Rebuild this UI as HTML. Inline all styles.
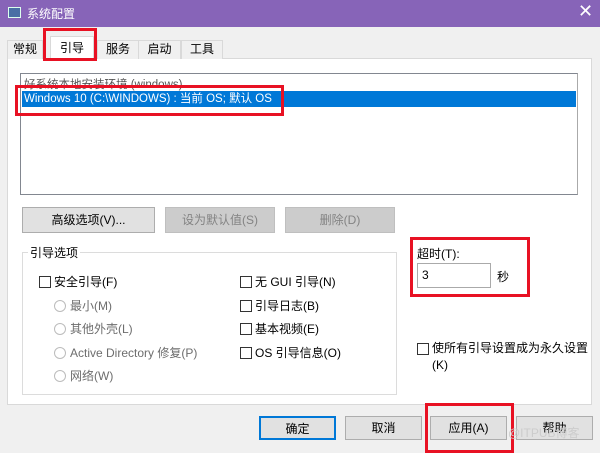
<!DOCTYPE html>
<html><head><meta charset="utf-8"><style>
*{box-sizing:border-box;margin:0;padding:0}
body{width:600px;height:450px;background:#f0f0f0;font-family:"Liberation Sans","Noto Sans CJK SC",sans-serif;font-size:12px;color:#000;position:relative;overflow:hidden}
.a{position:absolute}
.tb{left:0;top:0;width:600px;height:27px;background:#8764b8;color:#fff}
.tab{top:40px;height:19px;border:1px solid #d9d9d9;border-bottom:none;background:#f0f0f0;text-align:center;line-height:17px}
.btn{background:#e1e1e1;border:1px solid #adadad;text-align:center}
.dis{background:#cccccc;border:1px solid #bfbfbf;color:#838383}
.red{border:3px solid #e81123}
.cb{width:12px;height:12px;border:1px solid #333;background:#fff;display:inline-block;vertical-align:-2px;margin-right:3px}
.rd{width:12px;height:12px;border:1px solid #bcbcbc;border-radius:50%;display:inline-block;vertical-align:-2px;margin-right:4px}
.g{color:#6d6d6d}
</style></head><body>
<div class="a tb">
 <div class="a" style="left:8px;top:7px;width:13px;height:11px;border:1px solid #dfe;background:#4a6fa5"></div>
 <div class="a" style="left:27px;top:5px;font-size:12px">系统配置</div>
 <div class="a" style="left:578px;top:1px;font-size:18px;font-weight:300">✕</div>
</div>
<div class="a" style="left:7px;top:58px;width:585px;height:347px;background:#fff;border:1px solid #d9d9d9"></div>
<div class="a tab" style="left:7px;width:36px">常规</div>
<div class="a tab" style="left:97px;width:42px">服务</div>
<div class="a tab" style="left:138px;width:43px">启动</div>
<div class="a tab" style="left:181px;width:42px">工具</div>
<div class="a" style="left:50px;top:36px;width:44px;height:24px;background:#fff;border:1px solid #d9d9d9;border-bottom:none;text-align:center;line-height:22px">引导</div>
<div class="a red" style="left:43px;top:28px;width:54px;height:33px"></div>
<div class="a" style="left:20px;top:73px;width:558px;height:122px;border:1px solid #828790;border-right-color:#aaa;background:#fff"></div>
<div class="a" style="left:24px;top:76px;color:#555;font-size:11.5px">好系统本地安装环境 (windows)</div>
<div class="a" style="left:22px;top:91px;width:554px;height:16px;background:#0078d7;color:#fff;line-height:16px;padding-left:2px;font-size:11.5px">Windows 10 (C:\WINDOWS) : 当前 OS; 默认 OS</div>
<div class="a red" style="left:15px;top:85px;width:269px;height:31px"></div>
<div class="a btn" style="left:22px;top:207px;width:133px;height:26px;line-height:24px">高级选项(V)...</div>
<div class="a btn dis" style="left:165px;top:207px;width:110px;height:26px;line-height:24px">设为默认值(S)</div>
<div class="a btn dis" style="left:285px;top:207px;width:110px;height:26px;line-height:24px">删除(D)</div>
<div class="a" style="left:22px;top:252px;width:375px;height:143px;border:1px solid #dcdcdc"></div>
<div class="a" style="left:28px;top:244px;background:#fff;padding:0 2px">引导选项</div>
<div class="a" style="left:39px;top:273px"><span class="cb"></span>安全引导(F)</div>
<div class="a g" style="left:54px;top:297px"><span class="rd"></span>最小(M)</div>
<div class="a g" style="left:54px;top:320px"><span class="rd"></span>其他外壳(L)</div>
<div class="a g" style="left:54px;top:344px"><span class="rd"></span>Active Directory 修复(P)</div>
<div class="a g" style="left:54px;top:367px"><span class="rd"></span>网络(W)</div>
<div class="a" style="left:240px;top:273px"><span class="cb"></span>无 GUI 引导(N)</div>
<div class="a" style="left:240px;top:297px"><span class="cb"></span>引导日志(B)</div>
<div class="a" style="left:240px;top:320px"><span class="cb"></span>基本视频(E)</div>
<div class="a" style="left:240px;top:344px"><span class="cb"></span>OS 引导信息(O)</div>
<div class="a" style="left:417px;top:245px">超时(T):</div>
<div class="a" style="left:417px;top:263px;width:74px;height:25px;border:1px solid #aaa;background:#fff;padding:4px 4px">3</div>
<div class="a" style="left:497px;top:268px">秒</div>
<div class="a red" style="left:410px;top:237px;width:120px;height:60px"></div>
<div class="a" style="left:417px;top:340px;width:185px;line-height:17px;padding-left:15px;white-space:nowrap"><span class="cb" style="position:absolute;left:0;top:3px"></span>使所有引导设置成为永久设置<br>(K)</div>
<div class="a btn" style="left:259px;top:416px;width:77px;height:24px;line-height:22px;border:2px solid #0078d7">确定</div>
<div class="a btn" style="left:345px;top:416px;width:77px;height:24px;line-height:22px">取消</div>
<div class="a btn" style="left:430px;top:416px;width:77px;height:24px;line-height:22px">应用(A)</div>
<div class="a btn" style="left:516px;top:416px;width:77px;height:24px;line-height:22px">帮助</div>
<div class="a red" style="left:425px;top:403px;width:89px;height:50px"></div>
<div class="a" style="left:508px;top:424px;color:#ccc;font-size:12px">@ITPUB博客</div>
</body></html>
